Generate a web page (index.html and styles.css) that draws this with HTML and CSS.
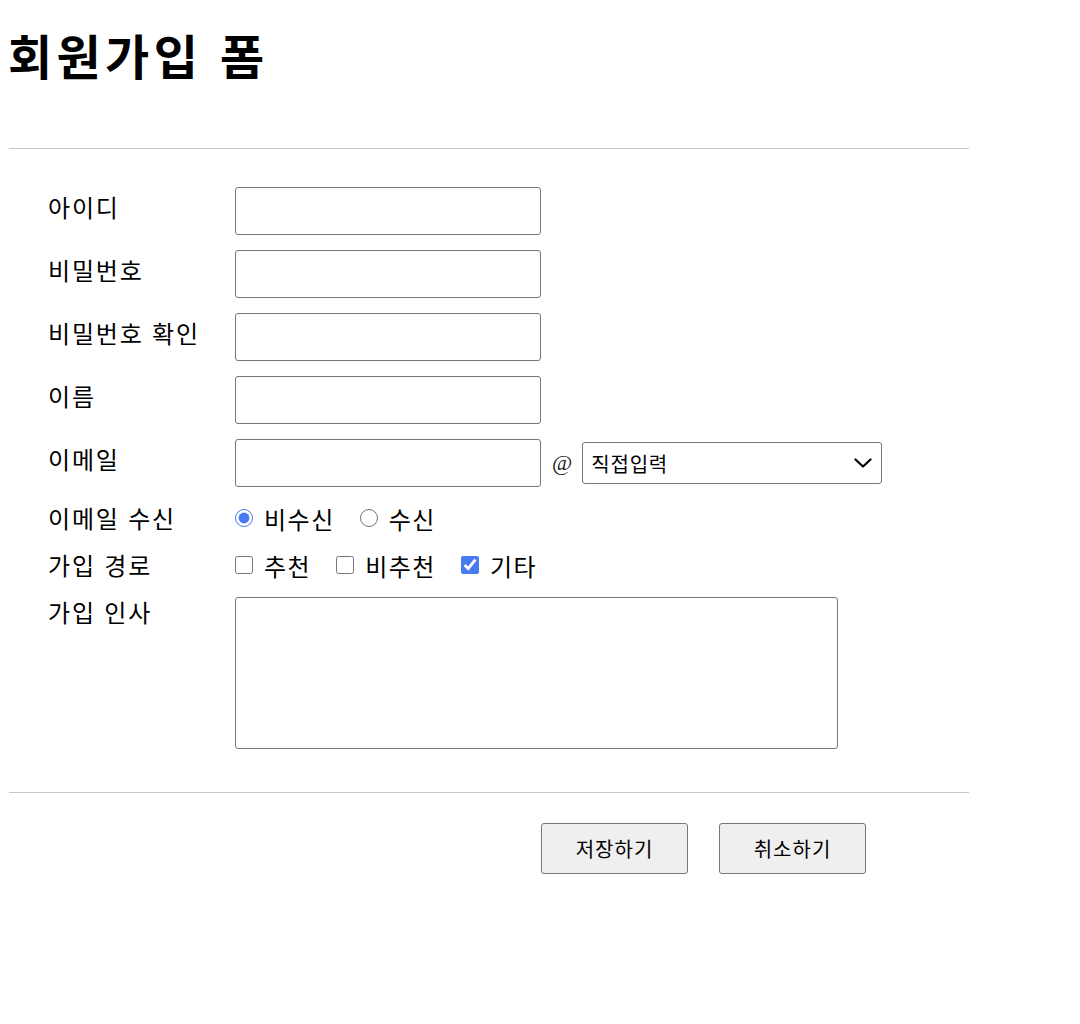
FILE: index.html
```html
<!DOCTYPE html>
<html lang="ko">
<head>
<meta charset="utf-8">
<title>회원가입 폼</title>
<link rel="stylesheet" href="styles.css">
</head>
<body>
<h1 class="title">회원가입 폼</h1>
<div class="rule rule-top"></div>
<form class="form">
  <div class="row">
    <label class="label">아이디</label>
    <div class="field"><input class="text" type="text"></div>
  </div>
  <div class="row">
    <label class="label">비밀번호</label>
    <div class="field"><input class="text" type="password"></div>
  </div>
  <div class="row">
    <label class="label">비밀번호 확인</label>
    <div class="field"><input class="text" type="password"></div>
  </div>
  <div class="row">
    <label class="label">이름</label>
    <div class="field"><input class="text" type="text"></div>
  </div>
  <div class="row">
    <label class="label">이메일</label>
    <div class="field">
      <input class="text" type="text">
      <span class="at">@</span>
      <div class="select-wrap">
        <select class="domain">
          <option>직접입력</option>
          <option>naver.com</option>
          <option>gmail.com</option>
        </select>
        <svg class="chevron" width="18" height="10" viewBox="0 0 18 10" aria-hidden="true">
          <path d="M1.5 1.5 L9 8.5 L16.5 1.5" fill="none" stroke="#000" stroke-width="2.2" stroke-linecap="round" stroke-linejoin="round"/>
        </svg>
      </div>
    </div>
  </div>
  <div class="row row-choice">
    <label class="label">이메일 수신</label>
    <div class="field choices">
      <label class="choice"><input type="radio" name="recv" checked>비수신</label>
      <label class="choice"><input type="radio" name="recv">수신</label>
    </div>
  </div>
  <div class="row row-choice">
    <label class="label">가입 경로</label>
    <div class="field choices">
      <label class="choice"><input type="checkbox">추천</label>
      <label class="choice"><input type="checkbox">비추천</label>
      <label class="choice"><input type="checkbox" checked>기타</label>
    </div>
  </div>
  <div class="row row-area">
    <label class="label">가입 인사</label>
    <div class="field"><textarea class="area"></textarea></div>
  </div>
</form>
<div class="rule rule-bottom"></div>
<div class="actions">
  <button class="btn" type="button">저장하기</button>
  <button class="btn" type="button">취소하기</button>
</div>
</body>
</html>
```

FILE: styles.css
```css
html, body {
  background: #fff;
}
body {
  margin: 8px;
  font-family: "Noto Sans CJK KR", "Noto Sans", sans-serif;
  color: #000;
}
.title {
  margin: 11px 0 0 0;
  font-size: 48px;
  font-weight: 700;
  line-height: 70px;
  letter-spacing: 4.4px;
}
.rule {
  width: 960px;
  margin-left: 1px;
  border-top: 1px solid #c8c8c8;
}
.rule-top {
  margin-top: 59px;
}
.form {
  padding: 38px 0 0 40px;
  display: flex;
  flex-direction: column;
  gap: 15px;
}
.row {
  display: flex;
  align-items: flex-start;
}
.label {
  width: 187px;
  flex: none;
  font-size: 24px;
  line-height: 34px;
  padding-top: 3px;
  letter-spacing: 1.8px;
}
.field {
  display: flex;
  align-items: center;
}
.text {
  box-sizing: border-box;
  width: 306px;
  height: 48px;
  margin: 0;
  border: 1px solid #767676;
  border-radius: 3px;
  padding: 2px 8px;
  font-size: 20px;
}
.at {
  font-family: "Liberation Serif", serif;
  font-size: 22px;
  margin: 0 10px 0 11px;
  color: #222;
}
.select-wrap {
  position: relative;
  display: flex;
}
.domain {
  appearance: none;
  -webkit-appearance: none;
  box-sizing: border-box;
  width: 300px;
  height: 42px;
  margin: 0;
  border: 1px solid #767676;
  border-radius: 3px;
  background: #fff;
  font-family: "Noto Sans CJK KR", sans-serif;
  font-size: 20px;
  letter-spacing: 0.8px;
  padding: 0 8px;
  color: #000;
}
.chevron {
  position: absolute;
  right: 10px;
  top: 16px;
  pointer-events: none;
}
.row-choice .label {
  padding-top: 0;
  line-height: 32px;
}
.choices {
  height: 32px;
  gap: 25px;
}
.choice {
  display: flex;
  align-items: center;
  font-size: 24px;
  letter-spacing: 1.5px;
  gap: 11px;
}
.choice input {
  margin: 0;
  width: 18px;
  height: 18px;
  accent-color: #4a7af2;
}
.row-area .label {
  padding-top: 0;
  margin-top: -2px;
}
.row-area {
  margin-top: 1px;
}
.area {
  box-sizing: border-box;
  width: 603px;
  height: 152px;
  margin: 0;
  border: 1px solid #767676;
  border-radius: 3px;
  resize: none;
}
.rule-bottom {
  margin-top: 43px;
}
.actions {
  display: flex;
  gap: 31px;
  padding: 30px 0 0 533px;
}
.btn {
  box-sizing: border-box;
  width: 147px;
  height: 51px;
  margin: 0;
  background: #efefef;
  border: 1px solid #767676;
  border-radius: 3px;
  font-family: "Noto Sans CJK KR", sans-serif;
  font-size: 20px;
  letter-spacing: 1px;
  color: #000;
}
```
